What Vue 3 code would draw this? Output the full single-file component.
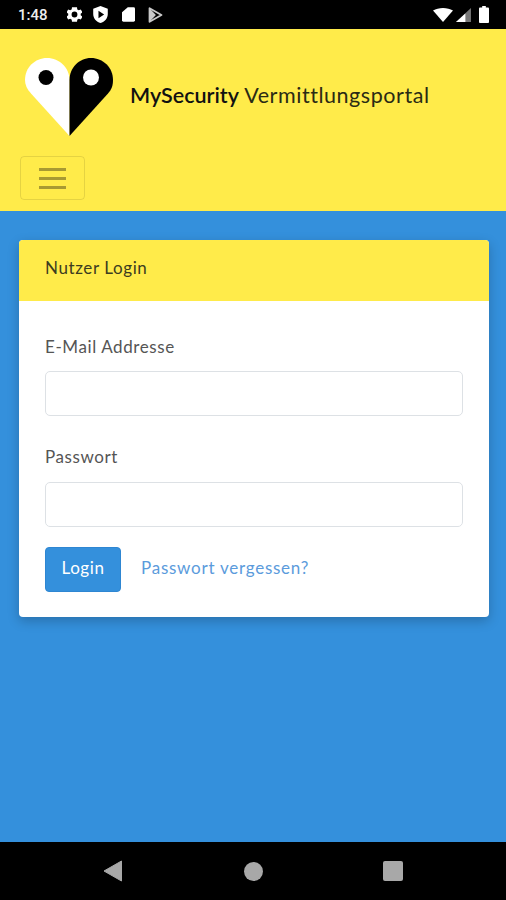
<template>
  <div class="screen">
    <div class="status-bar">
      <span class="clock">1:48</span>
      <div class="status-left">
        <svg class="ic-gear" width="15" height="15" viewBox="3 3 18 18"><path fill="#fff" fill-rule="evenodd" d="M19.400 13a7.500 7.500 0 0 0 0-2l2.100-1.600-2-3.500-2.500 1a7.500 7.500 0 0 0-1.700-1L15 3.200h-6l-.4 2.700a7.500 7.500 0 0 0-1.700 1l-2.500-1-2 3.500L4.500 11a7.500 7.500 0 0 0 0 2l-2.100 1.600 2 3.500 2.500-1a7.500 7.500 0 0 0 1.700 1l.4 2.700h6l.4-2.700a7.500 7.500 0 0 0 1.700-1l2.500 1 2-3.500zM12 15.500a3.500 3.500 0 1 1 0-7 3.500 3.500 0 0 1 0 7z"/></svg>
        <svg class="ic-shield" width="15" height="17" viewBox="3 1.500 18 21"><path fill="#fff" fill-rule="evenodd" d="M12 1.500 3 5v6.500c0 5.400 3.800 9.600 9 11 5.200-1.400 9-5.600 9-11V5zM9.500 7.500l7 4.500-7 4.500z"/></svg>
        <svg class="ic-card" width="13" height="15" viewBox="1 2 18 20"><path fill="#fff" d="M9 2h8a2 2 0 0 1 2 2v16a2 2 0 0 1-2 2H3a2 2 0 0 1-2-2V9z"/></svg>
        <svg class="ic-play" width="15" height="16" viewBox="3 2 19 20"><path fill="none" stroke="#c9c9c9" stroke-width="2.400" stroke-linejoin="round" d="M5 3.500v17L20 12z"/><path fill="#c9c9c9" d="M5 3.500 13 12l-8 8.500z"/></svg>
      </div>
      <div class="status-right">
        <svg width="20" height="14" viewBox="0 0 20 14"><path fill="#fff" d="M0 2.500C2.800.900 6.200 0 10 0s7.200.9 10 2.500L10 14z"/></svg>
        <svg width="15" height="14" viewBox="0 0 16 15"><path fill="#777" d="M16 0v15H0z"/><path fill="#fff" d="M10 6v9H0z"/></svg>
        <svg width="10" height="17" viewBox="0 0 11 16" preserveAspectRatio="none"><path fill="#fff" d="M3.500 0h4v1.500H10a1 1 0 0 1 1 1V15a1 1 0 0 1-1 1H1a1 1 0 0 1-1-1V2.500a1 1 0 0 1 1-1h2.500z"/></svg>
      </div>
    </div>

    <header class="topbar">
      <div class="brand">
        <svg class="logo" width="90" height="80" viewBox="0 0 90 80">
          <path fill="#fff" d="M44.500 78 6 35.500C2 31 0 27 0 22 0 9.500 10 0 22 0c12.500 0 22.500 10 22.500 22z"/>
          <path fill="#000" d="M44.500 78 83 35.500c4-4.500 5-8.500 5-13.500C88 9.500 78 0 66 0 54 0 44.500 10 44.500 22z"/>
          <circle cx="21" cy="19.500" r="7.500" fill="#000"/>
          <circle cx="66" cy="19.500" r="8" fill="#fff"/>
        </svg>
        <span class="brand-name"><span class="brand-strong">MySecurity</span> Vermittlungsportal</span>
      </div>
      <button type="button" class="toggler" aria-label="Menü">
        <span></span><span></span><span></span>
      </button>
    </header>

    <main class="content">
      <section class="card">
        <div class="card-header">Nutzer Login</div>
        <form class="card-body" @submit.prevent>
          <label class="label" for="email">E-Mail Addresse</label>
          <input id="email" class="input" type="email" />
          <label class="label" for="password">Passwort</label>
          <input id="password" class="input" type="password" />
          <div class="actions">
            <button type="submit" class="btn">Login</button>
            <a class="link" href="#">Passwort vergessen?</a>
          </div>
        </form>
      </section>
    </main>

    <nav class="nav-bar">
      <svg width="20" height="22" viewBox="0 0 20 22"><path fill="#a8a8a8" d="M18.500 1v20L1 11z" stroke="#a8a8a8" stroke-linejoin="round"/></svg>
      <span class="nav-home"></span>
      <span class="nav-square"></span>
    </nav>
  </div>
</template>

<script setup>
</script>

<style>
body { background: #000; }
</style>

<style scoped>
.screen { width: 506px; height: 900px; display: flex; flex-direction: column; overflow: hidden; font-family: Lato, "Noto Sans", sans-serif; background: #3490dc; }
.status-bar { height: 29px; flex: none; background: #000; color: #fff; display: flex; align-items: center; padding: 0 17px 0 18px; }
.clock { width: 34px; font-family: Roboto, sans-serif; font-size: 15px; font-weight: 500; color: #eee; white-space: nowrap; }
.status-left { display: flex; align-items: center; margin-left: 15px; }
.ic-shield { margin-left: 11px; }
.ic-card { margin-left: 14px; }
.ic-play { margin-left: 13px; }
.status-right { margin-left: auto; display: flex; align-items: center; gap: 3px; }
.status-right svg:last-child { margin-left: 5px; }
.topbar { height: 182px; flex: none; background: #ffeb4a; padding: 29px 20px 0; box-sizing: border-box; }
.brand { display: flex; align-items: flex-start; height: 98px; padding-left: 5px; }
.logo { flex: none; }
.brand-name { font-size: 21.500px; letter-spacing: .55px; color: #2a2a14; margin: 24px 0 0 15px; white-space: nowrap; }
.brand-strong { font-weight: 600; color: #111; letter-spacing: 0; }
.toggler { display: flex; flex-direction: column; justify-content: center; gap: 6px; align-items: center; width: 65px; height: 44px; padding: 0; background: transparent; border: 1px solid rgba(0, 0, 0, .1); border-radius: 4px; }
.toggler span { display: block; width: 27px; height: 3px; background: #a89a32; }
.content { flex: 1; padding: 29px 17px 0 19px; }
.card { background: #fff; border-radius: 4px; box-shadow: 0 4px 12px rgba(0, 0, 0, .22); overflow: hidden; }
.card-header { height: 61px; background: #ffeb4a; padding: 0 0 7px 26px; display: flex; align-items: center; box-sizing: border-box; font-size: 17px; letter-spacing: .6px; color: #3c3c20; }
.card-body { display: flex; flex-direction: column; align-items: flex-start; padding: 35px 26px 25px; }
.label { font-size: 17px; letter-spacing: .6px; line-height: 21px; color: #555; margin-bottom: 14px; }
.input { width: 418px; height: 45px; box-sizing: border-box; border: 1px solid #dde1e5; border-radius: 5px; background: #fff; margin-bottom: 30px; }
.input + .label { margin-bottom: 15px; }
.actions { display: flex; align-items: center; gap: 20px; margin-top: -10px; }
.btn { width: 76px; height: 45px; border: 1px solid #2e86d2; border-radius: 4px; background: #3490dc; color: #fff; font-family: inherit; font-size: 17px; letter-spacing: .6px; padding: 0 0 5px; }
.link { color: #5b9bdc; font-size: 17px; letter-spacing: .75px; text-decoration: none; margin-top: -5px; }
.nav-bar { height: 58px; flex: none; background: #000; display: flex; align-items: center; justify-content: space-between; padding: 0 103px; }
.nav-home { width: 19px; height: 19px; border-radius: 50%; background: #a8a8a8; }
.nav-square { width: 20px; height: 20px; border-radius: 2px; background: #a8a8a8; }
</style>
